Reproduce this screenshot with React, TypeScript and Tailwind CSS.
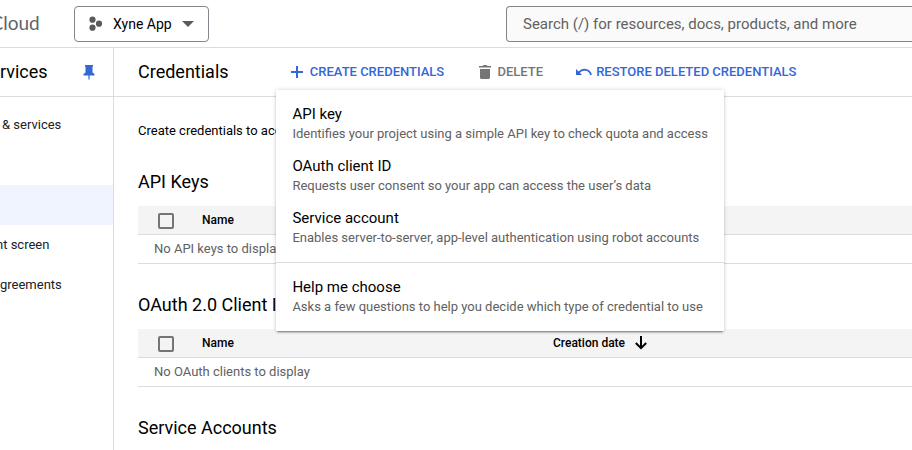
import React from "react";

const menuItems = [
  { title: "API key", text: "Identifies your project using a simple API key to check quota and access" },
  { title: "OAuth client ID", text: "Requests user consent so your app can access the user’s data" },
  { title: "Service account", text: "Enables server-to-server, app-level authentication using robot accounts" },
];

function Header() {
  return (
    <header className="flex h-12 items-center border-b border-[#dadce0] bg-white">
      <div className="flex w-[74px] shrink-0 justify-start">
        <span className="-ml-[9.500px] whitespace-nowrap font-[Lato,sans-serif] text-[19px] text-[#5f6368]">Cloud</span>
      </div>
      <button className="mt-px flex h-9 w-[135px] shrink-0 items-center rounded-[4px] border border-[#80868b] pl-[14px] text-[14px] font-medium text-[#202124]">
        <svg width="14" height="16" viewBox="0 0 14 16" fill="#5a5a5a">
          <circle cx="3.500" cy="3.700" r="3.100" />
          <circle cx="10" cy="7.700" r="3.100" />
          <circle cx="3.500" cy="11.700" r="3.100" />
        </svg>
        <span className="ml-[10px] font-normal text-black">Xyne App</span>
        <svg className="ml-[10px]" width="12" height="6" viewBox="0 0 12 6" fill="#5a5a5a">
          <path d="M0 0h12L6 6z" />
        </svg>
      </button>
      <div className="ml-[297px] mt-px flex h-9 flex-1 items-center rounded-l-[4px] border border-r-0 border-[#80868b] bg-[#fafafa] pl-4">
        <span className="whitespace-nowrap text-[15px] text-[#616161]">Search (/) for resources, docs, products, and more</span>
      </div>
    </header>
  );
}

function Sidebar() {
  return (
    <aside className="flex w-[114px] shrink-0 flex-col overflow-hidden border-r border-[#dadce0]">
      <div className="flex h-[49px] shrink-0 items-center border-b border-[#dadce0]">
        <span className="w-[82px] pb-[2px] text-[18px] text-black">rvices</span>
        <svg width="14" height="16" viewBox="0 0 14 16" fill="#3367d6">
          <path d="M3 1h8v1.600h-.5v5.900l2 1.500v1.500H7.600V15.500H6.400V11.500H1.500V10l2-1.500V2.600H3z" />
        </svg>
      </div>
      <nav className="mt-2 flex flex-col text-[13px] text-[#202124]">
        <a className="flex h-10 items-center whitespace-nowrap pl-[2px]">&amp; services</a>
        <a className="h-10" />
        <a className="h-10 bg-[#f0f4fe]" />
        <a className="-ml-1 flex h-10 items-center whitespace-nowrap">nt screen</a>
        <a className="flex h-10 items-center whitespace-nowrap">greements</a>
      </nav>
    </aside>
  );
}

function Section({ title, empty, date }: { title: string; empty: string; date?: boolean }) {
  return (
    <section className="mb-[29px]">
      <h2 className="h-6 text-[18px] leading-6 text-black">{title}</h2>
      <div className="mt-3">
        <div className="flex h-[29px] items-center border-b border-[#dadce0] bg-[#f4f4f4] text-[12px] font-medium text-black">
          <span className="ml-5 mt-[2px] size-4 rounded-[2px] border-2 border-[#757575]" />
          <span className="ml-7 w-[351px]">Name</span>
          {date && (
            <>
              <span>Creation date</span>
              <svg className="ml-[10px]" width="12" height="14" viewBox="0 0 12 14" fill="none" stroke="#000" strokeWidth="2">
                <path d="M6 0v12.500M.8 7l5.200 5.200L11.200 7" />
              </svg>
            </>
          )}
        </div>
        <div className="flex h-[29px] items-center border-b border-[#dadce0] pl-4 text-[13px] text-[#616161]">{empty}</div>
      </div>
    </section>
  );
}

function CreateMenu() {
  return (
    <div className="absolute left-[162px] top-[42px] z-10 h-[241px] w-[448px] bg-white pt-[14px] shadow-[0_2px_2px_-1px_rgba(0,0,0,0.5),0_0_4px_rgba(0,0,0,0.18)]">
      {menuItems.map((item) => (
        <div key={item.title} className="h-[52px] pl-[16.400px]">
          <div className="text-[15px] leading-5 text-black">{item.title}</div>
          <div className="whitespace-nowrap pt-px text-[13px] leading-[18px] text-[#616161]">{item.text}</div>
        </div>
      ))}
      <div className="mt-[2px] border-t border-[#dadce0] pl-[16.400px] pt-[14px]">
        <div className="text-[15px] leading-5 text-black">Help me choose</div>
        <div className="whitespace-nowrap pt-px text-[13px] leading-[18px] text-[#616161]">Asks a few questions to help you decide which type of credential to use</div>
      </div>
    </div>
  );
}

export default function App() {
  return (
    <div className="flex h-[450px] w-[912px] flex-col overflow-hidden bg-white font-[Roboto,sans-serif]">
      <Header />
      <div className="flex min-h-0 flex-1">
        <Sidebar />
        <main className="relative min-w-0 flex-1">
          <div className="flex h-[49px] items-center border-b border-[#dadce0] pl-6">
            <h1 className="w-[153px] pb-[2px] text-[18px] text-black">Credentials</h1>
            <button className="flex w-[188px] items-center whitespace-nowrap text-[13px] font-medium text-[#3367d6]">
              <svg className="mr-[6.800px]" width="12" height="12" viewBox="0 0 12 12" fill="#3367d6">
                <path d="M5 0h2v5h5v2H7v5H5V7H0V5h5z" />
              </svg>
              CREATE CREDENTIALS
            </button>
            <button className="flex w-[97px] items-center text-[13px] font-medium text-[#757575]">
              <svg className="mr-[6.400px]" width="12" height="14" viewBox="0 0 12 14" fill="#757575">
                <path d="M0 1h3.500l1-1h3l1 1H12v1.500H0zM1 4h10v8.500A1.500 1.500 0 0 1 9.500 14h-7A1.500 1.500 0 0 1 1 12.500z" />
              </svg>
              DELETE
            </button>
            <button className="flex items-center whitespace-nowrap text-[13px] font-medium text-[#3367d6]">
              <svg className="mr-[4.200px]" width="16" height="8" viewBox="0 0 16 8" fill="#3367d6">
                <path d="M0 1v6h6L3.800 4.800A6 6 0 0 1 14.200 7.300l1.700-.6A7.800 7.800 0 0 0 2.600 3.400z" />
              </svg>
              RESTORE DELETED CREDENTIALS
            </button>
          </div>
          <div className="pl-6 pt-6">
            <p className="mb-[29px] h-5 whitespace-nowrap text-[13px] leading-5 text-black">Create credentials to access</p>
            <Section title="API Keys" empty="No API keys to display" />
            <Section title="OAuth 2.0 Client IDs" empty="No OAuth clients to display" date />
            <h2 className="h-6 text-[18px] leading-6 text-black">Service Accounts</h2>
          </div>
          <CreateMenu />
        </main>
      </div>
    </div>
  );
}
